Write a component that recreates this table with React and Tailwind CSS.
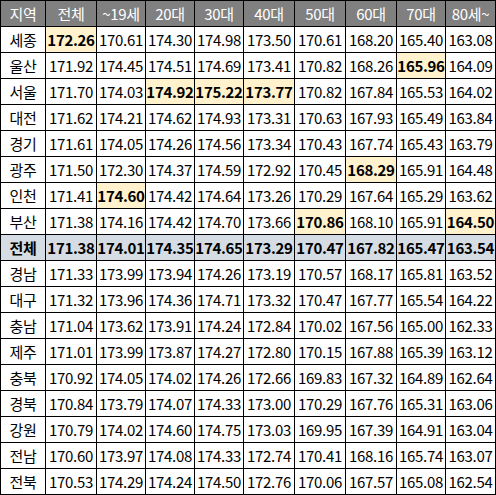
import React from "react";

const cols = ["지역", "전체", "~19세", "20대", "30대", "40대", "50대", "60대", "70대", "80세~"];

const rows = [
  ["세종", ["172.26", "170.61", "174.30", "174.98", "173.50", "170.61", "168.20", "165.40", "163.08"], [0]],
  ["울산", ["171.92", "174.45", "174.51", "174.69", "173.41", "170.82", "168.26", "165.96", "164.09"], [7]],
  ["서울", ["171.70", "174.03", "174.92", "175.22", "173.77", "170.82", "167.84", "165.53", "164.02"], [2, 3, 4]],
  ["대전", ["171.62", "174.21", "174.62", "174.93", "173.31", "170.63", "167.93", "165.49", "163.84"], []],
  ["경기", ["171.61", "174.05", "174.26", "174.56", "173.34", "170.43", "167.74", "165.43", "163.79"], []],
  ["광주", ["171.50", "172.30", "174.37", "174.59", "172.92", "170.45", "168.29", "165.91", "164.48"], [6]],
  ["인천", ["171.41", "174.60", "174.42", "174.64", "173.26", "170.29", "167.64", "165.29", "163.62"], [1]],
  ["부산", ["171.38", "174.16", "174.42", "174.70", "173.66", "170.86", "168.10", "165.91", "164.50"], [5, 8]],
  ["전체", ["171.38", "174.01", "174.35", "174.65", "173.29", "170.47", "167.82", "165.47", "163.54"], "total"],
  ["경남", ["171.33", "173.99", "173.94", "174.26", "173.19", "170.57", "168.17", "165.81", "163.52"], []],
  ["대구", ["171.32", "173.96", "174.36", "174.71", "173.32", "170.47", "167.77", "165.54", "164.22"], []],
  ["충남", ["171.04", "173.62", "173.91", "174.24", "172.84", "170.02", "167.56", "165.00", "162.33"], []],
  ["제주", ["171.01", "173.99", "173.87", "174.27", "172.80", "170.15", "167.88", "165.39", "163.12"], []],
  ["충북", ["170.92", "174.05", "174.02", "174.26", "172.66", "169.83", "167.32", "164.89", "162.64"], []],
  ["경북", ["170.84", "173.79", "174.07", "174.33", "173.00", "170.29", "167.76", "165.31", "163.06"], []],
  ["강원", ["170.79", "174.02", "174.60", "174.75", "173.03", "169.95", "167.39", "164.91", "163.04"], []],
  ["전남", ["170.60", "173.97", "174.08", "174.33", "172.74", "170.41", "168.16", "165.74", "163.07"], []],
  ["전북", ["170.53", "174.29", "174.24", "174.50", "172.76", "170.06", "167.57", "165.08", "162.54"], []],
];

export default function App() {
  return (
    <div className="w-[496px] bg-white font-['Noto_Sans_CJK_KR',sans-serif] text-[15px] leading-none tracking-[-0.3px] text-black">
      <div className="grid grid-cols-[44px_50px_48px_48px_48px_50px_50px_50px_48px_49px] auto-rows-[25px] gap-px border border-black bg-black">
        {cols.map((c) => (
          <div key={c} className="flex items-center justify-center bg-[#808080] text-white">
            {c}
          </div>
        ))}
        {rows.map(([region, vals, hl]) => {
          const total = hl === "total";
          return (
            <React.Fragment key={region}>
              <div className={`flex items-center justify-center ${total ? "bg-[#d6dce4] font-bold" : "bg-white"}`}>
                {region}
              </div>
              {vals.map((v, i) => {
                const mark = !total && hl.includes(i);
                return (
                  <div
                    key={i}
                    className={`flex items-center justify-center ${
                      total ? "bg-[#d6dce4] font-bold" : mark ? "bg-[#fff2cc] font-bold" : "bg-white"
                    }`}
                  >
                    {v}
                  </div>
                );
              })}
            </React.Fragment>
          );
        })}
      </div>
    </div>
  );
}
